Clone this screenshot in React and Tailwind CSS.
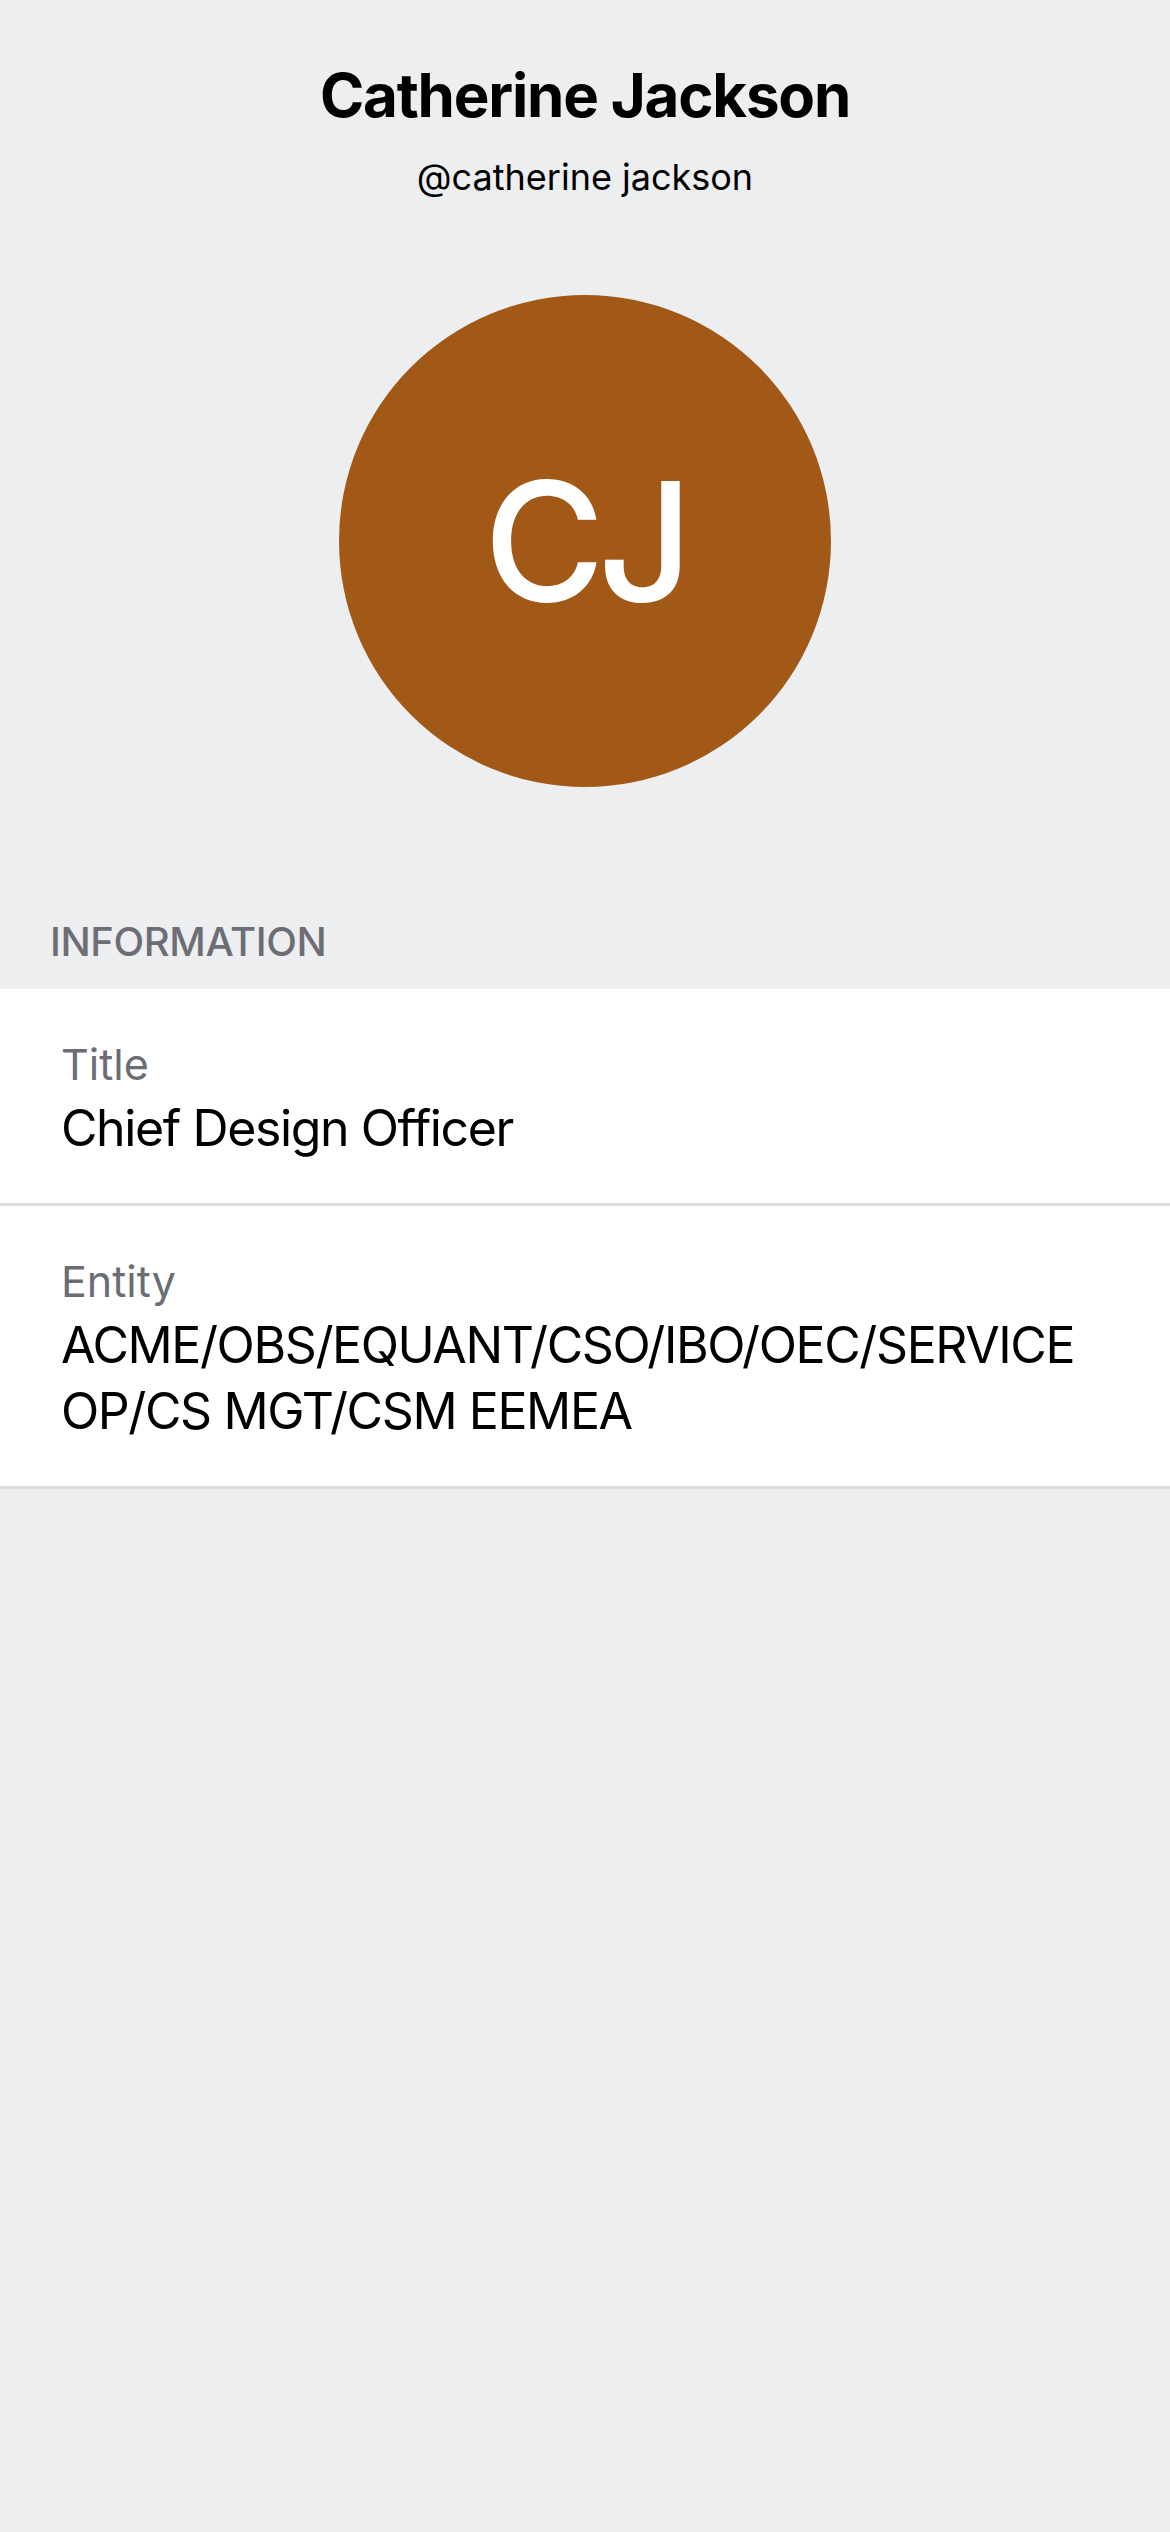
import React from 'react';

const profile = {
  name: 'Catherine Jackson',
  handle: '@catherine jackson',
  initials: 'CJ',
  info: [
    { label: 'Title', value: 'Chief Design Officer' },
    { label: 'Entity', value: 'ACME/OBS/EQUANT/CSO/IBO/OEC/SERVICE OP/CS MGT/CSM EEMEA' },
  ],
};

const InfoRow = ({ label, value }) => (
  <div className="px-[61px] pt-[49px] pb-[42px] border-b-[3px] border-[#dcdde1]">
    <div className="text-[43px] leading-[52px] text-[#6b6d74]">{label}</div>
    <div className="mt-[5px] text-[50px] leading-[66px] tracking-[-0.028em] text-black">{value}</div>
  </div>
);

const App = () => {
  return (
    <div className="min-h-[2532px] bg-[#edeef0] font-['Inter','Liberation_Sans',sans-serif]">
      <div className="flex flex-col items-center pt-[59px]">
        <h1 className="text-[60px] leading-[72px] font-bold tracking-[-0.02em] text-black">{profile.name}</h1>
        <p className="mt-[24px] text-[36px] leading-[44px] text-black">{profile.handle}</p>

        {/* avatar */}
        <div className="mt-[96px] w-[492px] h-[492px] rounded-full bg-[#a25917] flex items-center justify-center">
          <span className="text-[165px] leading-none font-medium tracking-[-0.04em] text-white">{profile.initials}</span>
        </div>
      </div>

      <div className="mt-[131px] px-[50px] text-[40px] leading-[48px] font-medium tracking-[-0.01em] text-[#6d6e75]">
        INFORMATION
      </div>

      <div className="mt-[23px] bg-white">
        {profile.info.map((item) => (
          <InfoRow key={item.label} label={item.label} value={item.value} />
        ))}
      </div>
    </div>
  );
};

export default App;
